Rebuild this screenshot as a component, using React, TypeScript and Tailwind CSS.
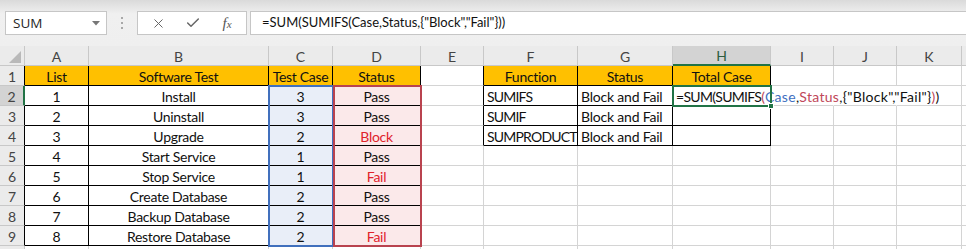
import { X, Check } from "lucide-react";

type Col = { key: string; w: string };

const COLS: Col[] = [
  { key: "A", w: "w-[64px]" },
  { key: "B", w: "w-[180px]" },
  { key: "C", w: "w-[64px]" },
  { key: "D", w: "w-[88px]" },
  { key: "E", w: "w-[63px]" },
  { key: "F", w: "w-[94px]" },
  { key: "G", w: "w-[95px]" },
  { key: "H", w: "w-[98px]" },
  { key: "I", w: "w-[63px]" },
  { key: "J", w: "w-[63px]" },
  { key: "K", w: "w-[65px]" },
];

const LEFT_TABLE: string[][] = [
  ["List", "Software Test", "Test Case", "Status"],
  ["1", "Install", "3", "Pass"],
  ["2", "Uninstall", "3", "Pass"],
  ["3", "Upgrade", "2", "Block"],
  ["4", "Start Service", "1", "Pass"],
  ["5", "Stop Service", "1", "Fail"],
  ["6", "Create Database", "2", "Pass"],
  ["7", "Backup Database", "2", "Pass"],
  ["8", "Restore Database", "2", "Fail"],
];

const RIGHT_TABLE: string[][] = [
  ["Function", "Status", "Total Case"],
  ["SUMIFS", "Block and Fail", ""],
  ["SUMIF", "Block and Fail", ""],
  ["SUMPRODUCT", "Block and Fail", ""],
];

function FormulaText() {
  return (
    <>
      <span className="tracking-[-0.7px]">=SUM(SUMIFS</span>
      <span className="tracking-[0.3px]">
        <span className="text-[#c0475a]">(</span>
        <span className="text-[#3f6fbf]">Case</span>,
        <span className="text-[#c0475a]">Status</span>,{'{"Block","Fail"}'}
        <span className="text-[#c0475a]">)</span>)
      </span>
    </>
  );
}

function TopBar() {
  return (
    <div className="flex h-[46px] items-center bg-gradient-to-b from-[#dadada] via-[#f0f0f0] via-30% to-[#efefef] pl-[5px] font-['Open_Sans',sans-serif]">
      <div className="flex h-[24px] w-[102px] items-center justify-between border border-[#c6c6c6] bg-white pl-[7px] pr-[6px] text-[13.5px] text-[#262626]">
        <span>SUM</span>
        <svg width="8" height="5" viewBox="0 0 8 5">
          <polygon points="0,0 8,0 4,4.5" fill="#777" />
        </svg>
      </div>
      <div className="flex w-[30px] flex-col items-center gap-[3px]">
        <span className="h-[2px] w-[2px] bg-[#a8a8a8]" />
        <span className="h-[2px] w-[2px] bg-[#a8a8a8]" />
        <span className="h-[2px] w-[2px] bg-[#a8a8a8]" />
      </div>
      <div className="flex h-[24px] w-[110px] items-center border border-[#c6c6c6] bg-white text-[#666]">
        <span className="flex w-[38px] justify-center pl-[2px]">
          <X size={15} strokeWidth={1.6} />
        </span>
        <span className="flex w-[34px] justify-center">
          <Check size={16} strokeWidth={2.2} />
        </span>
        <span className="flex w-[34px] items-baseline justify-center font-['Liberation_Serif',serif] text-[15px] italic text-[#555]">
          f<span className="text-[11px]">x</span>
        </span>
      </div>
      <div className="ml-[3px] flex h-[24px] flex-1 items-center border-y border-l border-[#c6c6c6] bg-white pl-[11px] font-['Lato',sans-serif] text-[13px] text-[#111]">
        =SUM(SUMIFS(Case,Status,{'{"Block","Fail"}'}))
      </div>
    </div>
  );
}

function HeaderRow() {
  return (
    <div className="flex h-[20px] bg-[#ebebeb] font-['Lato',sans-serif] text-[14px] text-[#444]">
      <div className="relative w-[25px] border-r border-b border-[#c8c8c8]">
        <svg className="absolute bottom-[2px] right-[3px]" width="12" height="12" viewBox="0 0 12 12">
          <polygon points="12,0 12,12 0,12" fill="#b9b9b9" />
        </svg>
      </div>
      {COLS.map((c) =>
        c.key === "H" ? (
          <div
            key={c.key}
            className={`${c.w} flex items-center justify-center border-r border-[#c8c8c8] border-b-2 border-b-[#217346] bg-[#d3d3d3] pt-[1px] text-[#2e5e3e]`}
          >
            {c.key}
          </div>
        ) : (
          <div
            key={c.key}
            className={`${c.w} flex items-center justify-center border-r border-b border-[#c8c8c8] pt-[1px]`}
          >
            {c.key}
          </div>
        ),
      )}
      <div className="flex-1 border-b border-[#c8c8c8]" />
    </div>
  );
}

function cellText(row: number, ci: number): string {
  if (row >= 1 && row <= 9 && ci <= 3) return LEFT_TABLE[row - 1][ci];
  if (row >= 1 && row <= 4 && ci >= 5 && ci <= 7) return RIGHT_TABLE[row - 1][ci - 5];
  return "";
}

function Row({ row }: { row: number }) {
  const inLeft = (ci: number) => row >= 1 && row <= 9 && ci <= 3;
  const inRight = (ci: number) => row >= 1 && row <= 4 && ci >= 5 && ci <= 7;
  const selected = row === 2;

  return (
    <div className="flex h-[20px] font-['Lato',sans-serif] text-[14px] text-[#111]">
      <div
        className={`w-[25px] flex items-center justify-center border-b border-[#c8c8c8] pt-[1px] text-[14px] text-[#444] ${
          selected
            ? "bg-[#d3d3d3] border-r-2 border-r-[#217346]"
            : row >= 1 && row <= 9
              ? "bg-[#ebebeb] border-r border-r-black"
              : "bg-[#ebebeb] border-r border-r-[#c8c8c8]"
        }`}
      >
        {row}
      </div>
      {COLS.map((c, ci) => {
        const text = cellText(row, ci);
        const black = inLeft(ci) || inRight(ci);
        const rightBlack = black || (row >= 1 && row <= 4 && ci === 4);
        const hideRight = row === 2 && (ci === 8 || ci === 9);
        const header = row === 1 && black;
        const fill = header
          ? "bg-[#ffc000]"
          : row >= 2 && row <= 9 && ci === 2
            ? "bg-[#e9eef8]"
            : row >= 2 && row <= 9 && ci === 3
              ? "bg-[#fbe9ea]"
              : "";
        const red = ci === 3 && (text === "Block" || text === "Fail");
        const leftAlign = row >= 2 && (ci === 5 || ci === 6);
        const caps = leftAlign && ci === 5;
        const isFormula = row === 2 && ci === 7;
        return (
          <div
            key={c.key}
            className={`${c.w} ${fill} flex items-center whitespace-nowrap border-r border-b pt-[2px] ${
              hideRight ? "border-r-transparent" : rightBlack ? "border-r-black" : "border-r-[#d4d4d4]"
            } ${black ? "border-b-black" : "border-b-[#d4d4d4]"} ${
              isFormula
                ? "relative z-10 overflow-visible pl-[3px]"
                : caps
                  ? "pl-[3px] tracking-[-0.8px]"
                  : leftAlign
                    ? "pl-[3px] tracking-[-0.2px]"
                    : "justify-center tracking-[-0.3px]"
            } ${red ? "text-[#e0222a]" : ""}`}
          >
            {isFormula ? <FormulaText /> : text}
          </div>
        );
      })}
      <div className="flex-1 border-b border-[#d4d4d4]" />
    </div>
  );
}

export default function App() {
  return (
    <div className="relative h-[249px] w-[966px] overflow-hidden bg-white">
      <TopBar />
      <div className="relative">
        <HeaderRow />
        {[1, 2, 3, 4, 5, 6, 7, 8, 9, 10].map((r) => (
          <Row key={r} row={r} />
        ))}
        {/* range highlights drawn while editing the formula */}
        <div className="pointer-events-none absolute left-[268px] top-[39px] h-[162px] w-[66px] border-2 border-[#4170bd]" />
        <div className="pointer-events-none absolute left-[333px] top-[39px] h-[162px] w-[89px] border-2 border-[#b9434f]" />
        {/* active cell */}
        <div className="pointer-events-none absolute left-[672px] top-[39px] z-20 h-[22px] w-[100px] border-2 border-[#217346]">
          <div className="absolute -bottom-[4px] -right-[4px] h-[6px] w-[6px] border border-white bg-[#217346]" />
        </div>
      </div>
    </div>
  );
}
